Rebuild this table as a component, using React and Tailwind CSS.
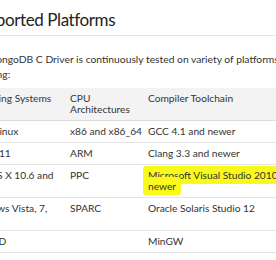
const rows = [
  ["GNU/Linux", "x86 and x86_64", "GCC 4.1 and newer"],
  ["Solaris 11", "ARM", "Clang 3.3 and newer"],
  ["Mac OS X 10.6 and newer", "PPC", "msvc"],
  ["Windows Vista, 7, and 8", "SPARC", "Oracle Solaris Studio 12"],
  ["FreeBSD", "", "MinGW"],
];

const Cell = ({ children, first }) => (
  <div className={first ? "py-[5px] pr-[14px]" : "py-[5px] pr-[3px]"}>{children}</div>
);

export default function App() {
  return (
    <div
      className="w-[276px] h-[260px] overflow-hidden bg-white text-[#333]"
      style={{ fontFamily: 'Lato, "Noto Sans", sans-serif' }}
    >
      <div className="-ml-[33px] w-[342px]">
        <h2 className="pt-[8px] pb-[3px] pl-[2px] text-[17px] leading-[24px] tracking-[-0.4px] text-[#222] border-b border-[#e6e6e6]">
          Supported Platforms
        </h2>
        <p className="mt-[16px] max-w-[322px] text-[10.3px] leading-[15px] text-[#333]">
          The MongoDB C Driver is continuously tested on variety of platforms including:
        </p>

        <div className="mt-[6px] text-[10.2px] leading-[11px]">
          <div className="grid grid-cols-[103px_78px_1fr] bg-[#f3f3f3] border-b border-[#dcdcdc]">
            <Cell first>Operating Systems</Cell>
            <Cell>CPU Architectures</Cell>
            <Cell>Compiler Toolchain</Cell>
          </div>
          {rows.map((r) => (
            <div
              key={r[0]}
              className="grid grid-cols-[103px_78px_1fr] border-b border-[#e3e3e3]"
            >
              <Cell first>{r[0]}</Cell>
              <Cell>{r[1]}</Cell>
              <Cell>
                {r[2] === "msvc" ? (
                  <span className="bg-[#f9f91c] box-decoration-clone rounded-[3px] px-[5px] -mx-[5px] py-[3px]">
                    Microsoft Visual Studio 2010 and newer
                  </span>
                ) : (
                  r[2]
                )}
              </Cell>
            </div>
          ))}
        </div>
      </div>
    </div>
  );
}
